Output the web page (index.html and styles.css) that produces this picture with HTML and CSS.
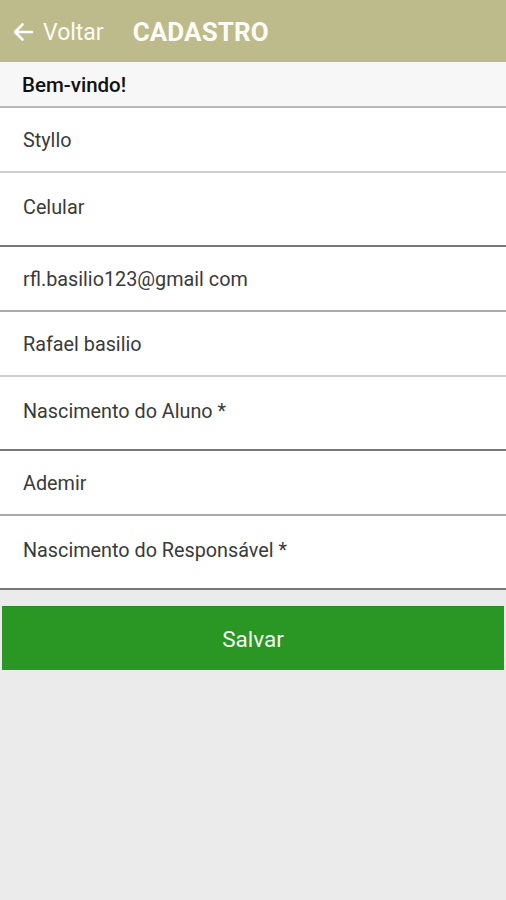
FILE: index.html
```html
<!DOCTYPE html>
<html lang="pt">
<head>
<meta charset="utf-8">
<title>Cadastro</title>
<link rel="stylesheet" href="styles.css">
</head>
<body>
<header class="topbar">
  <a class="back">
    <svg class="back-icon" width="24" height="24" viewBox="0 0 24 24"><path d="M21 12H4.5M11.5 4.5 4 12l7.5 7.5" fill="none" stroke="#fff" stroke-width="2.6" stroke-linecap="round" stroke-linejoin="round"/></svg>
    <span class="back-label">Voltar</span>
  </a>
  <h1 class="title">CADASTRO</h1>
</header>
<div class="welcome">Bem-vindo!</div>
<div class="form">
  <div class="field short light">Styllo</div>
  <div class="field tall dark">Celular</div>
  <div class="field short medium">rfl.basilio123@gmail com</div>
  <div class="field short light">Rafael basilio</div>
  <div class="field tall dark">Nascimento do Aluno *</div>
  <div class="field short medium">Ademir</div>
  <div class="field tall dark">Nascimento do Responsável *</div>
</div>
<div class="actions">
  <button class="save">Salvar</button>
</div>
</body>
</html>
```
FILE: styles.css
```css
* { box-sizing: border-box; }
html, body { margin: 0; padding: 0; }
body {
  background: #ebebeb;
  font-family: Roboto, "Noto Sans", Arial, sans-serif;
  height: 900px;
}
.topbar {
  height: 62px;
  background: #bdbb8b;
  display: flex;
  align-items: center;
  padding-left: 11px;
  padding-top: 2px;
}
.back {
  display: flex;
  align-items: center;
  color: #fff;
}
.back-icon { display: block; }
.back-label {
  margin-left: 8px;
  font-size: 23px;
  color: #fbfbf3;
}
.title {
  margin: 0 0 0 29px;
  font-size: 26px;
  font-weight: 700;
  color: #fcfcf5;
  letter-spacing: 0.1px;
}
.welcome {
  height: 46px;
  background: #f7f7f7;
  border-bottom: 2px solid #b8b8b8;
  padding-left: 22px;
  display: flex;
  align-items: center;
  padding-top: 2px;
  font-size: 20.5px;
  font-weight: 500;
  color: #111;
}
.form { background: #fff; }
.field {
  display: flex;
  align-items: center;
  padding-left: 23px;
  padding-top: 1px;
  font-size: 19.8px;
  color: #3a3a3a;
  background: #fff;
}
.short { height: 65px; }
.tall { height: 74px; padding-bottom: 4px; }
.light { border-bottom: 2px solid #cfcfcf; }
.medium { border-bottom: 2px solid #a9a9a9; }
.dark { border-bottom: 2px solid #787878; }
.actions {
  padding: 16px 2px 0 2px;
}
.save {
  display: block;
  width: 100%;
  height: 64px;
  background: #2a9624;
  border: none;
  border-top: 1px solid #238a1d;
  color: #f4fbf2;
  font-family: Roboto, "Noto Sans", Arial, sans-serif;
  font-size: 22.5px;
  padding: 0;
}
```
